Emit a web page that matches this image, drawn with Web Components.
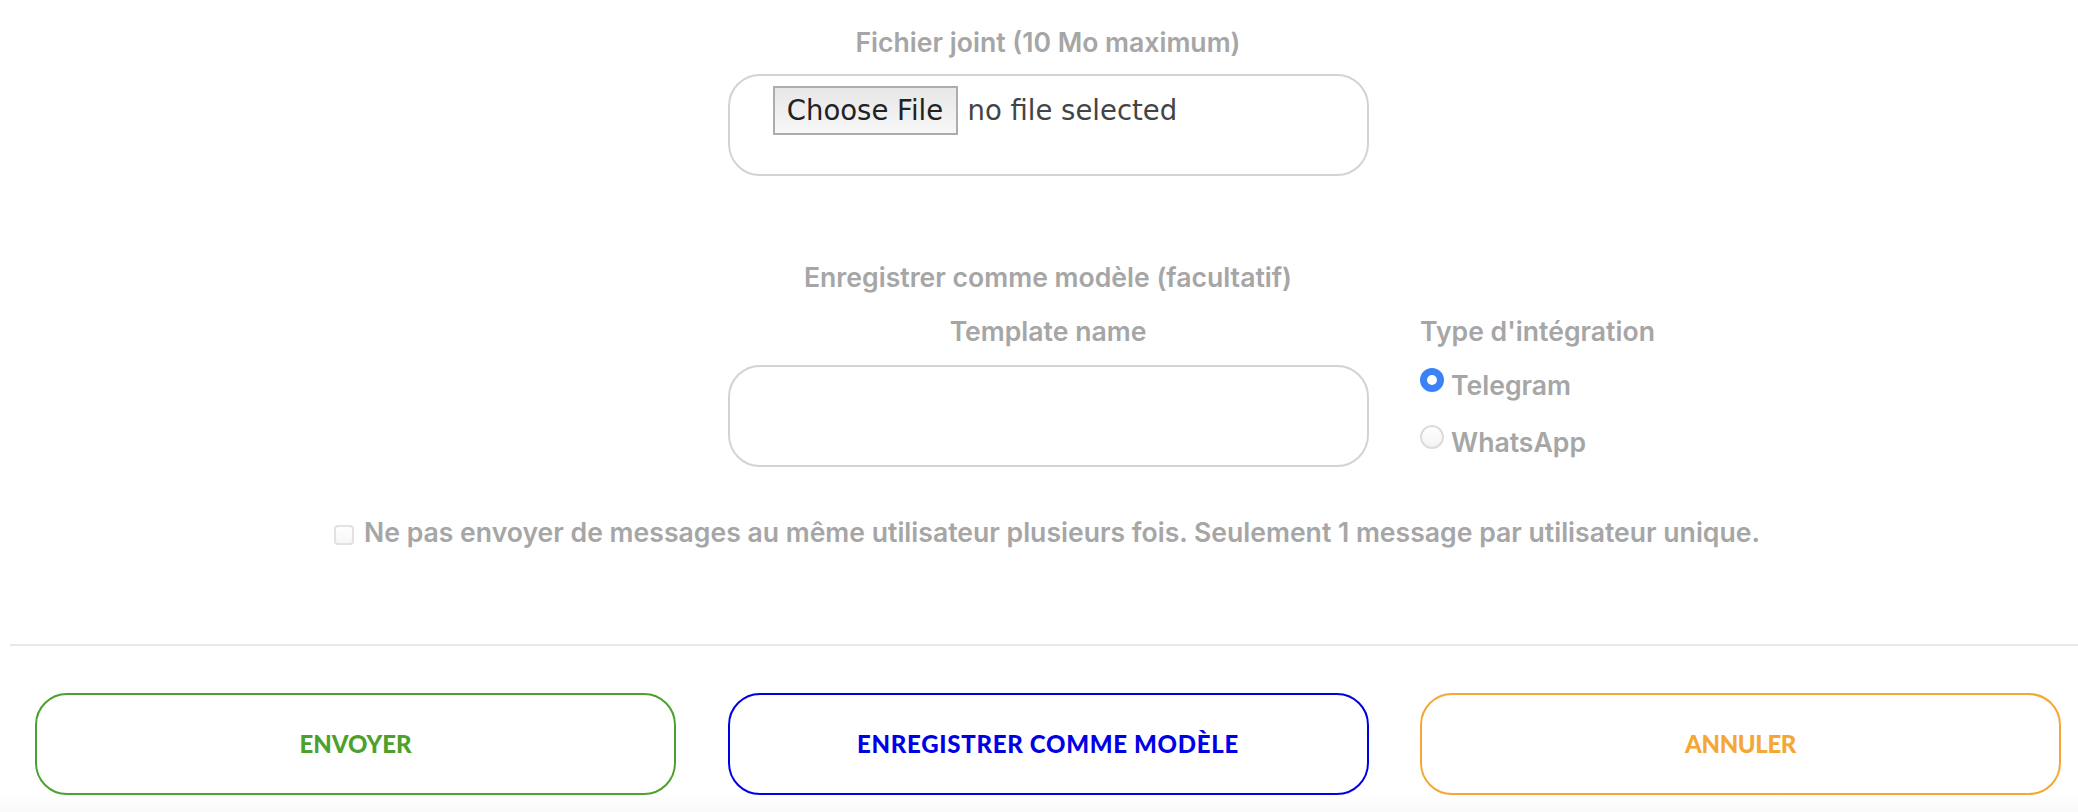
<!DOCTYPE html>
<html lang="fr">
<head>
<meta charset="utf-8">
<title>Envoi</title>
<style>
  html, body { margin: 0; padding: 0; background: #fff; overflow: hidden; }
  body { font-family: "Inter", "Liberation Sans", sans-serif; color: #a6a6a6; }
</style>
</head>
<body>
<template id="field-tpl">
  <style>
    :host { display: block; }
    .label {
      font: 600 26.6px/30px "Inter", "Liberation Sans", sans-serif;
      color: #a6a6a6;
      text-align: center;
      margin-bottom: var(--label-gap, 17px);
    }
    :host([left]) .label { text-align: left; }
  </style>
  <div class="label"><slot name="label"></slot></div>
  <slot></slot>
</template>

<template id="box-tpl">
  <style>
    :host {
      display: block;
      box-sizing: border-box;
      height: 102px;
      border: 2px solid #d3d3d3;
      border-radius: 32px;
      background: #fff;
      padding: 10px 0 0 43px;
    }
  </style>
  <slot></slot>
</template>

<template id="file-tpl">
  <style>
    :host { display: flex; align-items: center; gap: 10px; font: 400 27.5px/1 "DejaVu Sans", "Liberation Sans", sans-serif; }
    .btn {
      box-sizing: border-box;
      width: 185px;
      height: 49px;
      border: 2px solid #adadad;
      background: linear-gradient(#e7e7e7, #f7f7f7);
      color: #222;
      display: flex;
      align-items: center;
      justify-content: center;
    }
    .name { color: #444; }
  </style>
  <span class="btn">Choose File</span><span class="name">no file selected</span>
</template>

<template id="radio-tpl">
  <style>
    :host { display: flex; align-items: flex-start; gap: 7px; height: 57px; font: 600 26.6px/30px "Inter", "Liberation Sans", sans-serif; color: #a6a6a6; }
    .dot {
      box-sizing: border-box;
      width: 24px;
      height: 24px;
      border-radius: 50%;
      border: 2px solid #dcdcdc;
      background: linear-gradient(#fff, #f3f3f3);
      flex: none;
    }
    :host([checked]) .dot { border: 7px solid #3b82f6; background: #fff; }
    .txt { margin-top: 2px; }
  </style>
  <span class="dot"></span><span class="txt"><slot></slot></span>
</template>

<template id="check-tpl">
  <style>
    :host { display: flex; justify-content: center; align-items: center; gap: 10px; padding-left: 16px; font: 600 26.6px/30px "Inter", "Liberation Sans", sans-serif; color: #a6a6a6; }
    .box {
      box-sizing: border-box;
      width: 20px;
      height: 20px;
      margin-top: 5px;
      border: 2px solid #e2e2e2;
      border-radius: 4px;
      background: linear-gradient(#fff, #f6f6f6);
      flex: none;
    }
  </style>
  <span class="box"></span><span><slot></slot></span>
</template>

<template id="btn-tpl">
  <style>
    :host {
      display: flex;
      box-sizing: border-box;
      height: 102px;
      align-items: center;
      justify-content: center;
      border: 2px solid var(--c);
      border-radius: 32px;
      background: #fff;
      color: var(--c);
      font: 900 24px/1 "Lato", "Liberation Sans", sans-serif;
      letter-spacing: var(--ls, 0);
    }
  </style>
  <slot></slot>
</template>

<template id="row-tpl">
  <style>
    :host {
      display: grid;
      grid-template-columns: 641px 641px 641px;
      column-gap: 51.5px;
      padding-left: 35px;
    }
  </style>
  <slot></slot>
</template>

<template id="page-tpl">
  <style>
    :host { display: block; width: 2078px; height: 812px; padding-top: 27px; box-sizing: border-box; position: relative; overflow: hidden; }
    .fade { position: absolute; left: 0; right: 0; bottom: 0; height: 18px; background: linear-gradient(rgba(245,245,245,0), rgba(245,245,245,.55)); }
  </style>
  <slot></slot>
  <div class="fade"></div>
</template>

<x-page>
  <x-row style="margin-bottom:86px">
    <div></div>
    <x-field>
      <span slot="label">Fichier joint (10 Mo maximum)</span>
      <x-box><x-file></x-file></x-box>
    </x-field>
  </x-row>

  <x-row>
    <div></div>
    <x-field style="--label-gap:24px">
      <span slot="label">Enregistrer comme modèle (facultatif)</span>
    </x-field>
  </x-row>

  <x-row>
    <div></div>
    <x-field style="--label-gap:19px">
      <span slot="label">Template name</span>
      <x-box></x-box>
    </x-field>
    <x-field left style="--label-gap:22px">
      <span slot="label">Type d'intégration</span>
      <x-radio checked>Telegram</x-radio>
      <x-radio>WhatsApp</x-radio>
    </x-field>
  </x-row>

  <x-check style="margin-top:35px">Ne pas envoyer de messages au même utilisateur plusieurs fois. Seulement 1 message par utilisateur unique.</x-check>

  <div style="height:2px;background:#e8e8ec;margin:97px 0 47px 10px"></div>

  <x-row>
    <x-btn style="--c:#4ca12c">ENVOYER</x-btn>
    <x-btn style="--c:#0000e6;--ls:.7px">ENREGISTRER COMME MODÈLE</x-btn>
    <x-btn style="--c:#f5a733;--ls:-.4px">ANNULER</x-btn>
  </x-row>
</x-page>

<script>
  // every element just stamps its template into an open shadow root
  function define(tag, tplId) {
    customElements.define(tag, class extends HTMLElement {
      constructor() {
        super();
        this.attachShadow({ mode: 'open' });
        this.shadowRoot.appendChild(document.getElementById(tplId).content.cloneNode(true));
      }
    });
  }
  define('x-page', 'page-tpl');
  define('x-row', 'row-tpl');
  define('x-field', 'field-tpl');
  define('x-box', 'box-tpl');
  define('x-file', 'file-tpl');
  define('x-radio', 'radio-tpl');
  define('x-check', 'check-tpl');
  define('x-btn', 'btn-tpl');
</script>
</body>
</html>
